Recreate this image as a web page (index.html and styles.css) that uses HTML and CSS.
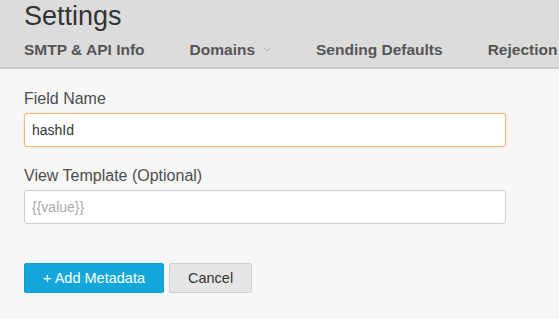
FILE: index.html
```html
<!DOCTYPE html>
<html lang="en">
<head>
  <meta charset="UTF-8">
  <meta name="viewport" content="width=device-width, initial-scale=1.0">
  <title>Settings</title>
  <link rel="stylesheet" href="styles.css">
</head>
<body>
  <div class="header">
    <h1>Settings</h1>
    <nav class="tabs">
      <a class="tab">SMTP &amp; API Info</a>
      <a class="tab">Domains
        <svg class="chevron" width="8" height="5" viewBox="0 0 8 5"><polyline points="0.5,0.5 4,4 7.5,0.5" fill="none" stroke="#aaa" stroke-width="1"/></svg>
      </a>
      <a class="tab">Sending Defaults</a>
      <a class="tab">Rejection Lists</a>
    </nav>
  </div>

  <form class="metadata-form">
    <div class="form-group">
      <label for="field-name">Field Name</label>
      <input type="text" id="field-name" class="active" value="hashId">
    </div>
    <div class="form-group">
      <label for="view-template">View Template (Optional)</label>
      <input type="text" id="view-template" placeholder="{{value}}">
    </div>
    <div class="actions">
      <button type="button" class="button primary">+ Add Metadata</button>
      <button type="button" class="button">Cancel</button>
    </div>
  </form>
</body>
</html>
```

FILE: styles.css
```css
body {
  font-family: 'Liberation Sans', Arial, sans-serif;
  background-color: #f7f7f7;
  color: #333;
  margin: 0;
  padding: 0;
}

.header {
  background-color: #dcdcdc;
  border-bottom: 2px solid #c9c9c9;
  padding: 0 24px;
  height: 67px;
  overflow: hidden;
  white-space: nowrap;
}

h1 {
  font-size: 27px;
  line-height: 32px;
  font-weight: normal;
  color: #333;
  margin: 0;
}

.tabs {
  display: flex;
  gap: 45px;
  line-height: 35px;
}

.tab {
  font-size: 15.5px;
  font-weight: bold;
  color: #555;
  display: flex;
  align-items: center;
  flex-shrink: 0;
}

.chevron {
  margin-left: 8px;
}

.metadata-form {
  padding: 20px 24px;
  max-width: 482px;
}

.form-group {
  margin-bottom: 19px;
}

.form-group label {
  display: block;
  font-size: 16px;
  line-height: 20px;
  color: #4d4d4d;
  margin-bottom: 4px;
}

.form-group input {
  display: block;
  width: 100%;
  height: 34px;
  box-sizing: border-box;
  padding: 0 7px;
  border: 1px solid #cfcfcf;
  border-radius: 3px;
  background-color: #fff;
  font-family: inherit;
  font-size: 14px;
  color: #333;
  outline: none;
}

.form-group input.active {
  border-color: #ebbd76;
  box-shadow: 0 0 2px rgba(240, 180, 90, 0.5);
}

.form-group input::placeholder {
  color: #aaa;
}

.actions {
  display: flex;
  gap: 5px;
  margin-top: 39px;
}

.button {
  height: 30px;
  padding: 0 18px;
  border: 1px solid #cfcfcf;
  border-radius: 2px;
  background-color: #e6e6e6;
  color: #333;
  font-family: inherit;
  font-size: 14.5px;
  cursor: pointer;
}

.button.primary {
  background-color: #12a6da;
  border-color: #109bcc;
  color: #fff;
}
```
